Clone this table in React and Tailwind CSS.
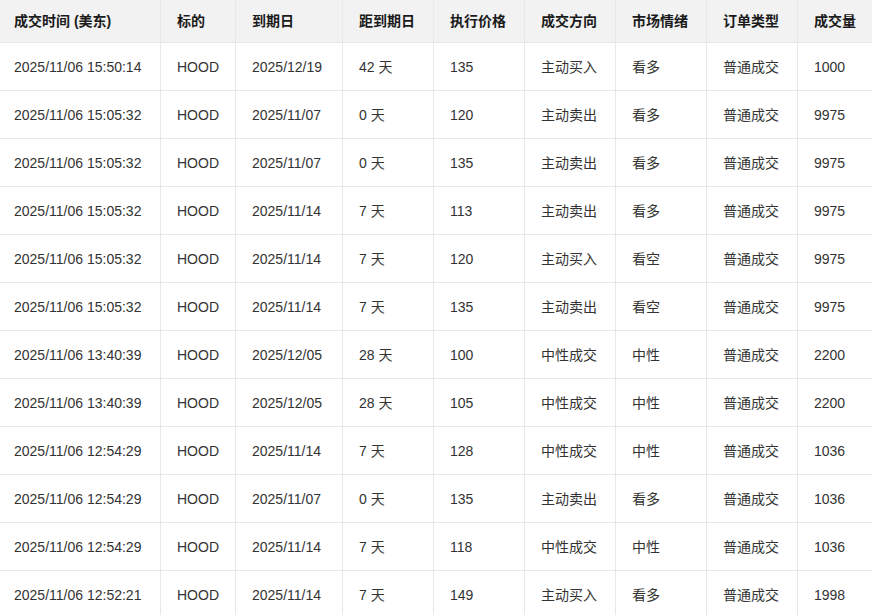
const columns = [
  { label: "成交时间 (美东)", width: "w-[161px]" },
  { label: "标的", width: "w-[75px]" },
  { label: "到期日", width: "w-[107px]" },
  { label: "距到期日", width: "w-[91px]" },
  { label: "执行价格", width: "w-[91px]" },
  { label: "成交方向", width: "w-[91px]" },
  { label: "市场情绪", width: "w-[91px]" },
  { label: "订单类型", width: "w-[91px]" },
  { label: "成交量", width: "w-[91px]" },
];

const trades = [
  ["2025/11/06 15:50:14", "HOOD", "2025/12/19", "42 天", "135", "主动买入", "看多", "普通成交", "1000"],
  ["2025/11/06 15:05:32", "HOOD", "2025/11/07", "0 天", "120", "主动卖出", "看多", "普通成交", "9975"],
  ["2025/11/06 15:05:32", "HOOD", "2025/11/07", "0 天", "135", "主动卖出", "看多", "普通成交", "9975"],
  ["2025/11/06 15:05:32", "HOOD", "2025/11/14", "7 天", "113", "主动卖出", "看多", "普通成交", "9975"],
  ["2025/11/06 15:05:32", "HOOD", "2025/11/14", "7 天", "120", "主动买入", "看空", "普通成交", "9975"],
  ["2025/11/06 15:05:32", "HOOD", "2025/11/14", "7 天", "135", "主动卖出", "看空", "普通成交", "9975"],
  ["2025/11/06 13:40:39", "HOOD", "2025/12/05", "28 天", "100", "中性成交", "中性", "普通成交", "2200"],
  ["2025/11/06 13:40:39", "HOOD", "2025/12/05", "28 天", "105", "中性成交", "中性", "普通成交", "2200"],
  ["2025/11/06 12:54:29", "HOOD", "2025/11/14", "7 天", "128", "中性成交", "中性", "普通成交", "1036"],
  ["2025/11/06 12:54:29", "HOOD", "2025/11/07", "0 天", "135", "主动卖出", "看多", "普通成交", "1036"],
  ["2025/11/06 12:54:29", "HOOD", "2025/11/14", "7 天", "118", "中性成交", "中性", "普通成交", "1036"],
  ["2025/11/06 12:52:21", "HOOD", "2025/11/14", "7 天", "149", "主动买入", "看多", "普通成交", "1998"],
];

export default function App() {
  return (
    <div className="h-[615px] w-[872px] overflow-hidden bg-white font-['Liberation_Sans','Noto_Sans_CJK_SC',sans-serif] text-[14px]">
      <table className="w-[889px] table-fixed border-separate border-spacing-0 text-left">
        <colgroup>
          {columns.map((col) => (
            <col key={col.label} className={col.width} />
          ))}
        </colgroup>
        <thead>
          <tr>
            {columns.map((col, i) => (
              <th
                key={col.label}
                className={
                  "h-[43px] border-b border-r border-[#e8e8e8] bg-[#f2f2f2] pr-2 align-middle font-bold whitespace-nowrap text-[#1a1a1a] " +
                  (i === 0 ? "pl-[14px]" : "pl-4")
                }
              >
                {col.label}
              </th>
            ))}
          </tr>
        </thead>
        <tbody>
          {trades.map((row, r) => (
            <tr key={r}>
              {row.map((cell, i) => (
                <td
                  key={i}
                  className={
                    "h-[48px] border-b border-r border-[#e8e8e8] pt-[2px] pr-2 align-middle whitespace-nowrap text-[#333333] " +
                    (i === 0 ? "pl-[14px]" : "pl-4")
                  }
                >
                  {cell}
                </td>
              ))}
            </tr>
          ))}
        </tbody>
      </table>
    </div>
  );
}
